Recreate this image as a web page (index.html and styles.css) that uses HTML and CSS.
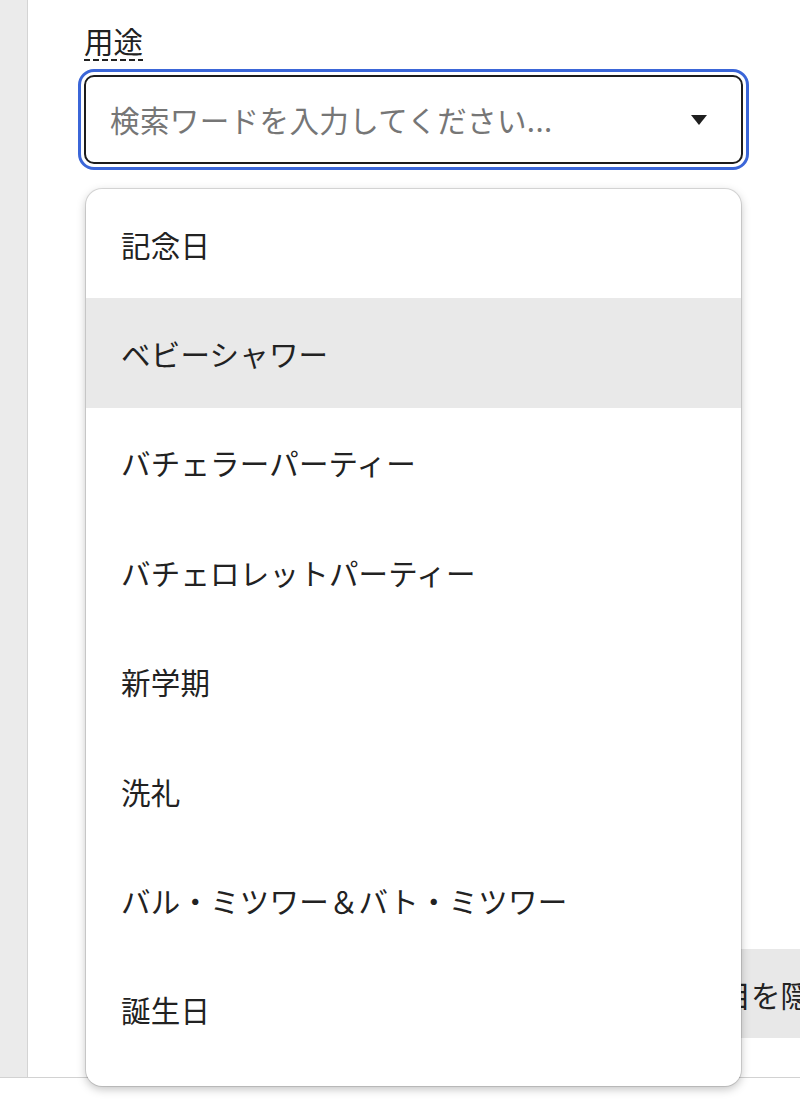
FILE: index.html
```html
<!DOCTYPE html>
<html lang="ja">
<head>
<meta charset="utf-8">
<link rel="stylesheet" href="styles.css">
</head>
<body>
<div class="page">
  <div class="rail"></div>
  <div class="main">
    <div class="field">
      <span class="label">用途</span>
      <div class="select">
        <span class="placeholder">検索ワードを入力してください...</span>
        <svg class="caret" width="16" height="11" viewBox="0 0 16 11"><path d="M0 0 H16 L8 10 Z" fill="#1f1f1f"/></svg>
      </div>
      <ul class="menu">
        <li class="opt">記念日</li>
        <li class="opt hover">ベビーシャワー</li>
        <li class="opt">バチェラーパーティー</li>
        <li class="opt">バチェロレットパーティー</li>
        <li class="opt">新学期</li>
        <li class="opt">洗礼</li>
        <li class="opt">バル・ミツワー＆バト・ミツワー</li>
        <li class="opt">誕生日</li>
      </ul>
    </div>
    <div class="actions">
      <button class="hide-btn">項目を隠す</button>
    </div>
  </div>
</div>
</body>
</html>
```
FILE: styles.css
```css
html, body {
  margin: 0;
  padding: 0;
  background: #ffffff;
  overflow: hidden;
}
body {
  width: 800px;
  height: 1107px;
  font-family: "Noto Sans CJK JP", "Noto Sans", sans-serif;
  color: #222222;
}
.page {
  display: flex;
  height: 1077px;
  border-bottom: 1px solid #d2d2d2;
}
.rail {
  width: 27px;
  flex: none;
  background: #ebebeb;
  border-right: 1px solid #d4d4d4;
}
.main {
  flex: 1;
  display: flex;
  flex-direction: column;
  padding-left: 56px;
  min-width: 0;
}
.field {
  position: relative;
  padding-top: 22px;
  width: 659px;
}
.label {
  display: inline-block;
  font-size: 29.5px;
  line-height: 36px;
  color: #222;
  padding-bottom: 3px;
  background-image: repeating-linear-gradient(to right, #222 0 6px, transparent 6px 9px);
  background-size: 100% 2px;
  background-position: left bottom;
  background-repeat: no-repeat;
}
.select {
  margin-top: 14px;
  box-sizing: border-box;
  height: 89px;
  border: 2px solid #1c1c1c;
  border-radius: 10px;
  outline: 3px solid #3b66d8;
  outline-offset: 3px;
  display: flex;
  align-items: center;
  padding: 0 34px 0 24px;
}
.placeholder {
  flex: 1;
  font-size: 29.5px;
  letter-spacing: 0.4px;
  color: #767676;
  white-space: nowrap;
  padding-bottom: 2px;
}
.caret {
  display: block;
  margin-top: 2px;
}
.menu {
  position: absolute;
  top: 189px;
  left: 2px;
  width: 655px;
  height: 897px;
  box-sizing: border-box;
  margin: 0;
  padding: 0;
  list-style: none;
  background: #fff;
  border-radius: 16px;
  box-shadow: 0 0 0 1px rgba(0,0,0,0.12), 0 3px 10px rgba(0,0,0,0.25);
  overflow: hidden;
  z-index: 5;
}
.opt {
  height: 109.4px;
  display: flex;
  align-items: center;
  padding-left: 35px;
  font-size: 29.5px;
  letter-spacing: 0.2px;
  color: #222;
  white-space: nowrap;
}
.opt.hover {
  background: #e9e9e9;
}
.actions {
  margin-top: auto;
  margin-bottom: 39px;
  padding-left: 584px;
  display: flex;
}
.hide-btn {
  flex: none;
  height: 89px;
  padding: 0 24px;
  border: none;
  background: #e8e8e8;
  font-family: "Noto Sans CJK JP", sans-serif;
  font-size: 29.5px;
  color: #222;
  white-space: nowrap;
}
```
